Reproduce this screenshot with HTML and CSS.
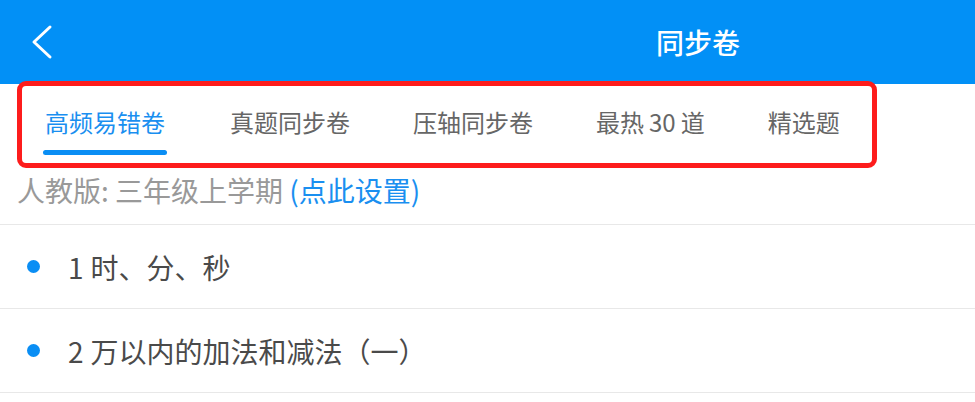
FILE: index.html
```html
<!DOCTYPE html>
<html>
<head>
<meta charset="UTF-8">
<meta name="viewport" content="width=device-width, initial-scale=1.0">
<title>同步卷</title>
<link rel="stylesheet" href="styles.css">
</head>
<body>
    <div class="page">
        <div class="header">
            <span class="back">
                <svg width="24" height="36" viewBox="0 0 24 36">
                    <polyline points="19,3 3,18 19,33" fill="none" stroke="#ffffff" stroke-width="3" stroke-linecap="round" stroke-linejoin="round"/>
                </svg>
            </span>
            <span class="title">同步卷</span>
        </div>

        <div class="tabs">
            <div class="tab active"><span class="label">高频易错卷</span><span class="bar"></span></div>
            <div class="tab"><span class="label">真题同步卷</span></div>
            <div class="tab"><span class="label">压轴同步卷</span></div>
            <div class="tab"><span class="label">最热<span class="num">30</span>道</span></div>
            <div class="tab"><span class="label">精选题</span></div>
        </div>

        <div class="info">人教版: 三年级上学期 <span class="link">(点此设置)</span></div>

        <div class="row"><span class="dot"></span><span class="text"><span class="num">1</span>时、分、秒</span></div>
        <div class="row"><span class="dot"></span><span class="text"><span class="num">2</span>万以内的加法和减法（一）</span></div>

        <!-- marcação vermelha da captura -->
        <div class="mark"></div>
    </div>
</body>
</html>
```

FILE: styles.css
```css
body {
    margin: 0;
    padding: 0;
    background-color: #ffffff;
    font-family: "PingFang SC", "Noto Sans CJK SC", "Noto Sans", sans-serif;
}
.page {
    position: relative;
    width: 975px;
    height: 402px;
    overflow: hidden;
}
.header {
    height: 84px;
    background-color: #0290f6;
    display: flex;
    align-items: center;
}
.back {
    display: flex;
    margin-left: 31px;
    width: 24px;
}
.title {
    margin-left: 601px;
    color: #ffffff;
    font-size: 28px;
    font-weight: 500;
}
.tabs {
    height: 84px;
    display: flex;
    gap: 63px;
    padding-left: 43px;
    box-sizing: border-box;
}
.tab {
    display: flex;
    flex-direction: column;
    align-items: center;
    padding-top: 22px;
    font-size: 24px;
    line-height: 32px;
    color: #666666;
}
.label {
    white-space: nowrap;
}
.label .num {
    margin: 0 5px;
}
.tab.active {
    color: #1a8ff0;
}
.bar {
    display: block;
    width: 124px;
    height: 5px;
    margin-top: 12px;
    border-radius: 3px;
    background-color: #0a8ef4;
}
.info {
    height: 57px;
    padding-left: 17px;
    line-height: 44px;
    font-size: 28px;
    color: #999999;
    border-bottom: 1px solid #e8e8e8;
    box-sizing: border-box;
}
.link {
    color: #1a8ff0;
}
.row {
    height: 84px;
    display: flex;
    align-items: center;
    border-bottom: 1px solid #e8e8e8;
    box-sizing: border-box;
}
.dot {
    width: 13px;
    height: 13px;
    margin-left: 27px;
    margin-right: 28px;
    border-radius: 50%;
    background-color: #0a8ef4;
}
.text {
    font-size: 28px;
    color: #4a4a4a;
}
.text .num {
    margin-right: 7px;
}
.mark {
    position: absolute;
    left: 17px;
    top: 81px;
    width: 860px;
    height: 87px;
    border: 5px solid #fd1c1c;
    border-radius: 9px;
    box-sizing: border-box;
}
```
